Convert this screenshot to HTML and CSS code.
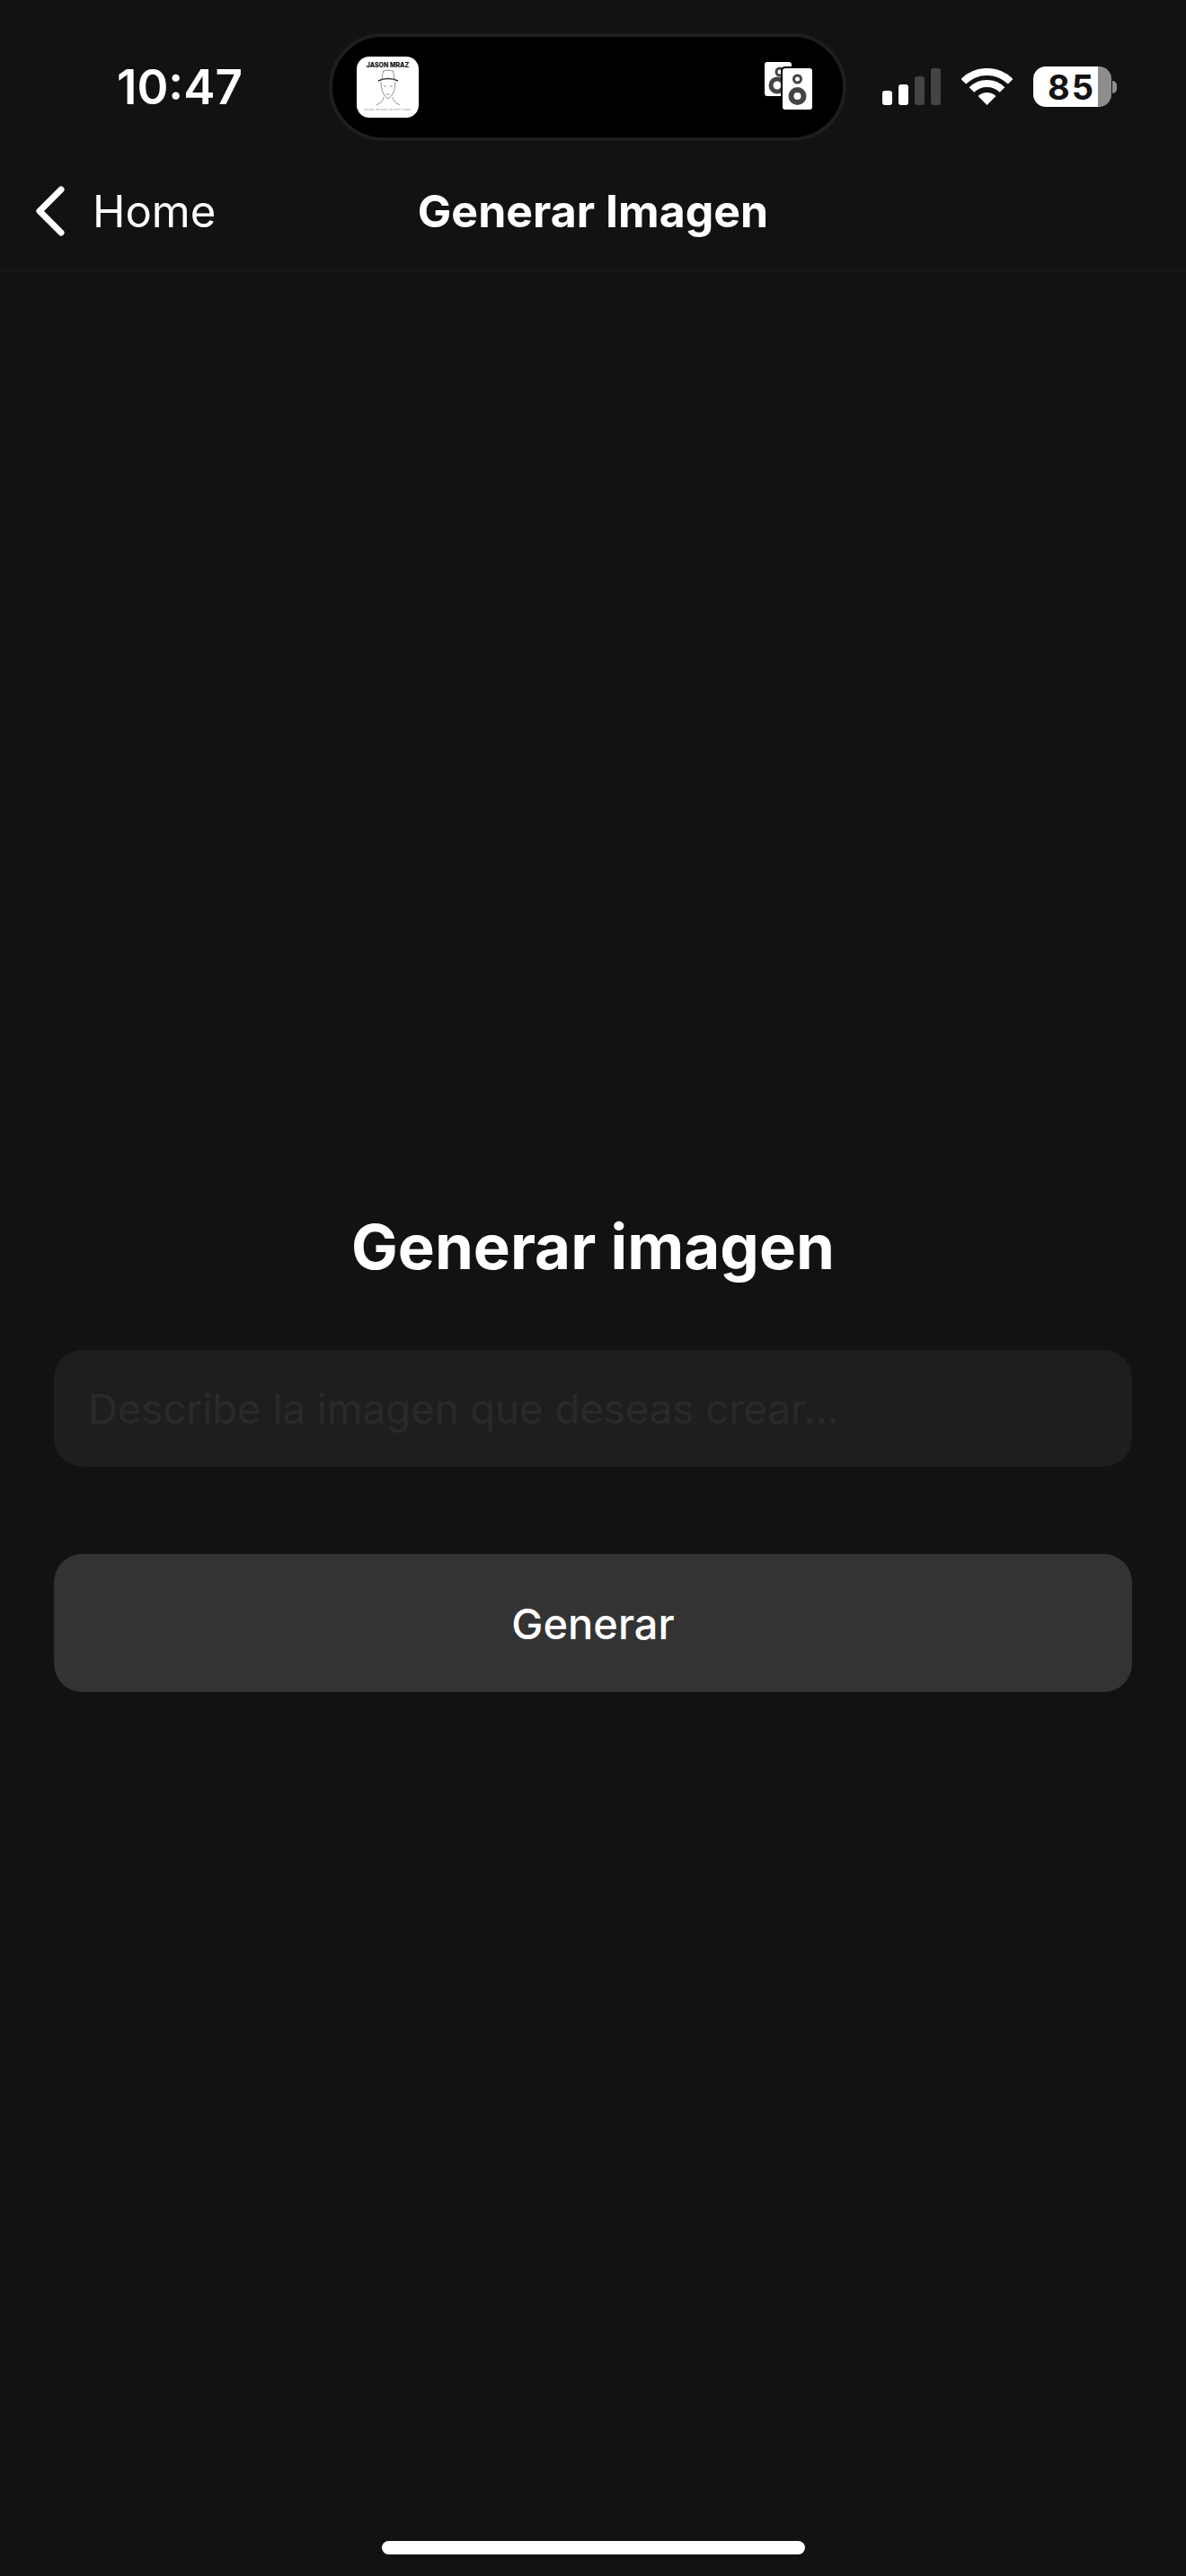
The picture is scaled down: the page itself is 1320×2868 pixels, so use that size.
FILE: index.html
```html
<!DOCTYPE html>
<html>
<head>
    <meta charset="UTF-8">
    <title>Generar Imagen</title>
    <link rel="stylesheet" href="styles.css">
</head>
<body>
    <div class="status-bar">
        <div class="time">10:47</div>
        <div class="island">
            <svg class="cover" viewBox="0 0 69 68">
                <rect width="69" height="68" rx="14" fill="#fff"/>
                <text x="34.5" y="12" text-anchor="middle" class="cover-title">JASON MRAZ</text>
                <g fill="none" stroke="#666" stroke-width="0.7">
                    <path d="M28 25 L29.5 16 Q35 14 40.5 16 L42 25"/>
                    <path d="M24 27 Q35 22 46 27" stroke="#333" stroke-width="1.4"/>
                    <path d="M27 28 Q27 42 35 47 Q43 42 43 28"/>
                    <path d="M30 45 Q30 50 22 54 M40 45 Q40 50 48 54"/>
                    <path d="M30 33 h3 M37 33 h3 M33 42 h4"/>
                </g>
                <text x="34.5" y="60" text-anchor="middle" class="cover-sub">WE SING. WE DANCE. WE STEAL THINGS.</text>
            </svg>
            <svg class="speakers" viewBox="0 0 53 53">
                <rect x="0" y="0" width="30" height="38" rx="3" fill="#fff"/>
                <circle cx="17" cy="11" r="4" fill="none" stroke="#444" stroke-width="3"/>
                <circle cx="14" cy="26" r="7" fill="none" stroke="#444" stroke-width="5"/>
                <rect x="18" y="5" width="37" height="50" rx="5" fill="#000"/>
                <rect x="20" y="7" width="33" height="46" rx="3" fill="#fff"/>
                <circle cx="36.5" cy="19" r="4" fill="none" stroke="#444" stroke-width="3"/>
                <circle cx="36.5" cy="38" r="7" fill="none" stroke="#444" stroke-width="6"/>
            </svg>
        </div>
        <div class="status-icons">
            <div class="signal">
                <span class="bar bar-1"></span>
                <span class="bar bar-2"></span>
                <span class="bar bar-3 off"></span>
                <span class="bar bar-4 off"></span>
            </div>
            <svg class="wifi" viewBox="0 0 57 41">
                <g fill="none" stroke="#fff" stroke-width="8">
                    <path d="M2.3 14.8 A37 37 0 0 1 54.7 14.8"/>
                    <path d="M11.5 24 A24 24 0 0 1 45.5 24"/>
                </g>
                <path d="M28.5 41 L18.6 31.1 A14 14 0 0 1 38.4 31.1 Z" fill="#fff"/>
            </svg>
            <div class="battery">
                <div class="battery-body"><span>85</span></div>
                <div class="battery-nub"></div>
            </div>
        </div>
    </div>

    <nav class="nav-bar">
        <a class="back" href="#">
            <svg class="chevron" viewBox="0 0 32 56">
                <path d="M28 4 L4 28 L28 52" fill="none" stroke="#fff" stroke-width="7" stroke-linecap="round" stroke-linejoin="round"/>
            </svg>
            <span>Home</span>
        </a>
        <div class="nav-title">Generar Imagen</div>
    </nav>

    <main class="content">
        <h1>Generar imagen</h1>
        <input class="prompt" type="text" placeholder="Describe la imagen que deseas crear...">
        <button class="generate" type="button">Generar</button>
    </main>

    <div class="home-bar"></div>
</body>
</html>
```

FILE: styles.css
```css
:root {
    --bg-color: #121212;
    --input-color: #1e1e1e;
    --button-color: #333333;
    --off-color: #444444;
}

* {
    box-sizing: border-box;
}

body {
    margin: 0;
    width: 1320px;
    height: 2868px;
    display: flex;
    flex-direction: column;
    background-color: var(--bg-color);
    color: #fff;
    font-family: Inter, "Noto Sans", sans-serif;
}

.status-bar {
    display: flex;
    align-items: center;
    height: 157px;
    padding-top: 37px;
}

.time {
    width: 366px;
    padding-left: 130px;
    font-size: 53px;
    font-weight: 600;
    line-height: 1;
}

.island {
    display: flex;
    align-items: center;
    justify-content: space-between;
    width: 576px;
    height: 120px;
    padding: 4px 34px 0 27px;
    background-color: #000;
    border: 4px solid #1e1e1e;
    border-radius: 60px;
}

.cover {
    width: 69px;
    height: 68px;
    margin-top: -4px;
}

.cover-title {
    font-size: 7px;
    font-weight: 800;
    fill: #111;
}

.cover-sub {
    font-size: 2.6px;
    fill: #888;
}

.speakers {
    width: 53px;
    height: 53px;
    margin-top: -7px;
    overflow: visible;
}

.status-icons {
    display: flex;
    align-items: flex-end;
    height: 45px;
    margin: -1px 0 0 40px;
}

.signal {
    display: flex;
    align-items: flex-end;
    gap: 7px;
    margin-bottom: 2px;
}

.bar {
    width: 11px;
    background-color: #fff;
    border-radius: 3px;
}

.bar.off {
    background-color: var(--off-color);
}

.bar-1 { height: 16px; }
.bar-2 { height: 23px; }
.bar-3 { height: 32px; }
.bar-4 { height: 41px; }

.wifi {
    width: 57px;
    height: 41px;
    margin: 0 0 2px 23px;
}

.battery {
    display: flex;
    align-items: center;
    height: 45px;
    margin-left: 23px;
}

.battery-body {
    display: flex;
    align-items: center;
    justify-content: center;
    width: 87px;
    height: 45px;
    padding-right: 2px;
    border-radius: 14px;
    background: linear-gradient(to right, #fff 72px, #8e8e8e 72px);
    color: var(--bg-color);
    font-size: 38px;
    font-weight: 700;
    letter-spacing: 2px;
    line-height: 1;
}

.battery-nub {
    width: 5px;
    height: 14px;
    margin-left: 1px;
    border-radius: 0 7px 7px 0;
    background-color: #8e8e8e;
}

.nav-bar {
    display: grid;
    grid-template-columns: 1fr auto 1fr;
    align-items: center;
    height: 145px;
    padding-top: 12px;
    border-bottom: 1px solid #1b1b1b;
}

.back {
    display: flex;
    align-items: center;
    gap: 31px;
    padding-left: 40px;
    color: #fff;
    text-decoration: none;
    font-size: 49px;
    line-height: 1;
}

.chevron {
    width: 32px;
    height: 56px;
}

.nav-title {
    font-size: 50px;
    font-weight: 700;
    line-height: 1;
}

.content {
    flex: 1;
    display: flex;
    flex-direction: column;
    align-items: center;
    padding: 1045px 60px 0;
}

h1 {
    margin: 0 0 74px;
    font-size: 69px;
    font-weight: 700;
    line-height: 82px;
}

.prompt {
    width: 100%;
    height: 130px;
    padding: 0 38px;
    border: none;
    border-radius: 32px;
    background-color: var(--input-color);
    color: #fff;
    font-family: inherit;
    font-size: 45.5px;
    outline: none;
}

.prompt::placeholder {
    color: #2a2a2a;
    opacity: 1;
}

.generate {
    width: 100%;
    height: 154px;
    margin-top: 97px;
    border: none;
    border-radius: 32px;
    background-color: var(--button-color);
    color: #fff;
    font-family: inherit;
    font-size: 47px;
    font-weight: 500;
}

.home-bar {
    align-self: center;
    width: 471px;
    height: 15px;
    margin-bottom: 24px;
    border-radius: 8px;
    background-color: #fff;
}
```
